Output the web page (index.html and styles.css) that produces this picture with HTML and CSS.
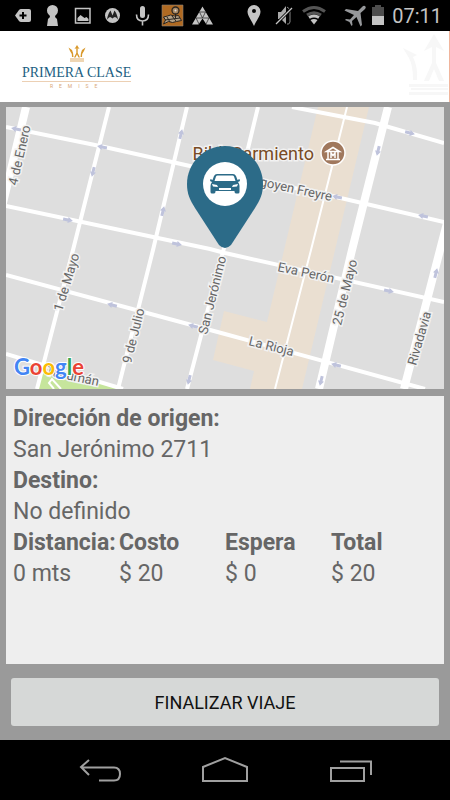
FILE: index.html
```html
<!DOCTYPE html>
<html lang="es">
<head>
<meta charset="UTF-8" />
<title>Primera Clase Remise</title>
<meta name="viewport" content="width=device-width, initial-scale=1.0" />
<link rel="stylesheet" href="styles.css">
</head>
<body>
<div class="statusbar">
    <div class="status-icons">
        <svg width="30" height="31" viewBox="0 0 30 31"><path fill="#c4c4c4" d="M7 15.5l4-5.5q.8-1 2-1h8a2 2 0 0 1 2 2v9a2 2 0 0 1-2 2h-8q-1.200 0-2-1z"/><path stroke="#000" stroke-width="2" d="M15 12v7M11.500 15.500h7"/></svg>
        <svg width="30" height="31" viewBox="0 0 30 31"><g fill="#c4c4c4"><circle cx="14.500" cy="10.500" r="5.500"/><path d="M11 13h7l-1 4 2 2 1 7H9l1-7 2-2z"/></g></svg>
        <svg width="30" height="31" viewBox="0 0 30 31"><path fill="none" stroke="#c4c4c4" stroke-width="1.500" d="M7.500 8.500h14.500v14.500H7.500z"/><path fill="#c4c4c4" d="M9.500 21v-3l3-3 4 3 2-1 2 2v2z"/></svg>
        <svg width="30" height="31" viewBox="0 0 30 31"><circle cx="14.500" cy="15.500" r="7.500" fill="#c4c4c4"/><path fill="#222" d="M9 19.500q1-6 3.500-9l2 5 2-5q2.500 3 3.500 9-1.500-2.500-3-2.500t-2.500 1.500q-1.500-1.500-2.500-1.500t-3 2.500z"/></svg>
        <svg width="30" height="31" viewBox="0 0 30 31"><rect x="12" y="6" width="5" height="12" rx="2.500" fill="#c4c4c4"/><path fill="none" stroke="#c4c4c4" stroke-width="1.600" d="M8.500 14.500q0 6.500 6 6.500t6-6.500M14.500 21v4.500"/></svg>
        <svg width="30" height="31" viewBox="0 0 30 31"><path fill="#b06a22" stroke="#8d8578" stroke-width=".6" d="M4 5h21v21H4z"/><path fill="#b4a288" stroke="#292521" d="M5.500 17l4-1 3-1 4 1 4-.500 3 5-5 1-4 1-4-1-5 2.500 2-4z"/><path stroke="#292521" d="M7 20l15-2M9 17l3 5M14 16l4 5"/><circle cx="17.500" cy="10.500" r="3.500" fill="#a98a66" stroke="#292521" stroke-width="1.300"/><circle cx="17.500" cy="10.500" r="1" fill="#ddd"/><path stroke="#292521" d="M17.500 14v5"/></svg>
        <svg width="30" height="31" viewBox="0 0 30 31"><path fill="#c4c4c4" d="M14.500 6.500L25 24.500h-6.500l-4-6-4 6H4z"/><path fill="none" stroke="#333" stroke-width=".8" d="M11.500 12h6l-3 6zM8 18h13M8 18l3 6M21 18l-3 6"/></svg>
    </div>
    <div class="status-icons">
        <svg width="30" height="31" viewBox="0 0 30 31"><path fill="#c4c4c4" fill-rule="evenodd" d="M15 5a6.500 6.500 0 0 1 6.500 6.500C21.500 16 17 21 15 26 13 21 8.500 16 8.500 11.500A6.500 6.500 0 0 1 15 5zm0 4a2 2 0 1 0 0 4 2 2 0 0 0 0-4z"/></svg>
        <svg width="30" height="31" viewBox="0 0 30 31"><path fill="#aaa" d="M9 12h3l5-6v18l-5-5H9z"/><path fill="none" stroke="#888" d="M18 7q3 1 3 5v10q-1 3-3 2"/><path stroke="#000" stroke-width="3" d="M8 23L23 8"/><path stroke="#c4c4c4" stroke-width="1.300" d="M7 24L23 8"/></svg>
        <svg width="30" height="31" viewBox="0 0 30 31"><path fill="none" stroke="#555" stroke-width="3" d="M4 11.500q11-8 22 0M8 15q7-4.500 14 0"/><path fill="none" stroke="#c4c4c4" stroke-width="3" d="M10 17.500q5-3 10 0"/><path fill="#c4c4c4" d="M11.500 20q3.500-2 7 0L15 24.500z"/></svg>
        <svg class="plane" width="26" height="31" viewBox="0 0 26 31"><path fill="#96989b" d="M23.500 6.500q-1.500-1.500-3.500.5l-4 4-12-2-1.500 1.500 9.500 4.500-4 4.500-4-.500-1 1 4.500 2 2 4 1-1-.5-4 4.500-4 4 9.500 1.500-1.500-1.500-12 4-3.500q2-1.500 1-3z"/></svg>
        <svg width="20" height="31" viewBox="0 0 20 31"><path fill="#4d4d4d" d="M4 7h3V5h6v2h3v9H4z"/><path fill="#c4c4c4" d="M4 16h12v9H4z"/></svg>
        <time class="clock">07:11</time>
    </div>
</div>

<header class="header">
    <div class="logo">
        <svg width="18" height="17" viewBox="0 0 18 17"><path fill="#d9982a" d="M.5 2.500L4 5q1.500 3 1.500 7H4q0-4-2-6zM17.500 2.500L14 5q-1.500 3-1.500 7H14q0-4 2-6zM9 0l2.500 4-1.800-.8V8l2.300 4.500h-1.500L9 9.500l-1.500 3H6L8.300 8V3.200L6.500 4z"/><path stroke="#e0ae68" stroke-width="1.200" d="M2 14h14M2 16h14"/></svg>
        <span class="logo-name">PRIMERA CLASE</span>
        <span class="logo-sub">REMISE</span>
    </div>
    <svg class="crown" width="47" height="71" viewBox="0 0 47 71"><g fill="#f7f7f7"><path d="M1 17l14 7-4 2q5 10 4 23h-4q0-15-4-22zM32 3l10 17-8-4v16l8 18h-5l-5-12-5 12h-5l8-18V16l-8 4z"/><path d="M7 53h39v3H7zM9 57h37v2H9zM7 61h39v3H7z"/></g></svg>
</header>

<main class="trip">
    <svg class="map" viewBox="6 107 438 282" preserveAspectRatio="xMidYMid slice" role="img" aria-label="Mapa">
        <defs>
            <path id="arrow" d="M-5-1.500h5V-3l5 3-5 3V1.500h-5z" fill="#bfc3dc"/>
        </defs>
        <rect x="6" y="107" width="438" height="282" fill="#dedede"/>
        <path fill="#eadfd1" d="M318 107h51L302 389h-52l4-18-41-11 11-49 43 11z"/>
        <path fill="#c6e59c" d="M41 364l82 25H37z"/>
        <g class="streets">
            <path d="M6 127l94 19 90 20 142 30 112 26M6 206l204 43 15 4 219 49M6 275l219 59 200 55M6 354l117 35M292 107l83 16 69 20"/>
            <path d="M109 107L73 250 37 389M187 107l-34 143-35 139M258 107l-34 141-37 141"/>
            <path stroke-width="2" d="M347 107l-36 143-36 139M54 389l-5-6 3-4 9 10"/>
            <path stroke-width="8" d="M26 107L2 207M388 107l-36 143-33 139M447 223l-43 166"/>
        </g>
        <use href="#arrow" transform="translate(16 129) rotate(191)"/>
        <use href="#arrow" transform="translate(102 147) rotate(191)"/>
        <use href="#arrow" transform="translate(93 172) rotate(104)"/>
        <use href="#arrow" transform="translate(181 134) rotate(-76)"/>
        <use href="#arrow" transform="translate(163 211) rotate(-76)"/>
        <use href="#arrow" transform="translate(68 220) rotate(12)"/>
        <use href="#arrow" transform="translate(177 244) rotate(12)"/>
        <use href="#arrow" transform="translate(112 305) rotate(194)"/>
        <use href="#arrow" transform="translate(193 326) rotate(194)"/>
        <use href="#arrow" transform="translate(189 380) rotate(104)"/>
        <use href="#arrow" transform="translate(410 133) rotate(14)"/>
        <use href="#arrow" transform="translate(378 151) rotate(104)"/>
        <use href="#arrow" transform="translate(337 197) rotate(192)"/>
        <use href="#arrow" transform="translate(423 216) rotate(192)"/>
        <use href="#arrow" transform="translate(389 291) rotate(12)"/>
        <use href="#arrow" transform="translate(436 273) rotate(-76)"/>
        <use href="#arrow" transform="translate(336 365) rotate(195)"/>
        <use href="#arrow" transform="translate(321 381) rotate(104)"/>
        <g class="street-names">
            <text transform="translate(17 186) rotate(-77)">4 de Enero</text>
            <text transform="translate(62 312) rotate(-73)">1 de Mayo</text>
            <text transform="translate(131 364) rotate(-76)">9 de Julio</text>
            <text transform="translate(207 335) rotate(-76)">San Jerónimo</text>
            <text transform="translate(341 326) rotate(-76)">25 de Mayo</text>
            <text transform="translate(416 366) rotate(-74)">Rivadavia</text>
            <text transform="translate(277 271) rotate(12)">Eva Perón</text>
            <text transform="translate(248 345) rotate(14)">La Rioja</text>
            <text transform="translate(331 201) rotate(12)" text-anchor="end">Irigoyen Freyre</text>
            <text transform="translate(98 386) rotate(12)" text-anchor="end">Tucumán</text>
        </g>
        <text class="place" x="314" y="160" text-anchor="end">Bibl. Sarmiento</text>
        <circle cx="333" cy="153" r="12" fill="#a0785d" stroke="#fff" stroke-width="1.500"/>
        <path fill="none" stroke="#fff" stroke-width="1.500" d="M326.500 151.500l6.500-4 6.500 4zM328 152v7M338 152v7M326 159.500h14M331 158v-5l2 2.500 2-2.500v5"/>
        <path fill="#2c6b88" d="M225 146c21 0 38 17 38 38 0 10-3 16-8 24l-24 37q-6 6-12 0l-24-37c-5-8-8-14-8-24 0-21 17-38 38-38z"/>
        <circle cx="225" cy="184" r="22" fill="#fff"/>
        <path fill="#2c6b88" fill-rule="evenodd" d="M217 174h16q2 0 3 2l1.500 4 2-1 .5 2-2 1q1.500 2 1.500 4v6q0 1.500-1.500 1.500h-2q-1.500 0-1.500-2v-.5h-19v.5q0 2-1.500 2h-2q-1.500 0-1.500-1.500v-6q0-2 1.500-4l-2-1 .5-2 2 1 1.500-4q1-2 3-2zm.500 1.500q-1 0-1.500 1l-1.500 4.500h21l-1.500-4.500q-.5-1-1.500-1zM212 184l1 2.500 5 .5-1-2zM238 184l-1 2.500-5 .5 1-2zM219 188v2h12v-2z"/>
        <text class="google" x="14" y="375"><tspan fill="#4285f4">G</tspan><tspan fill="#ea4335">o</tspan><tspan fill="#fbbc05">o</tspan><tspan fill="#4285f4">g</tspan><tspan fill="#34a853">l</tspan><tspan fill="#ea4335">e</tspan></text>
    </svg>

    <section class="details">
        <dl class="places">
            <dt>Dirección de origen:</dt>
            <dd>San Jerónimo 2711</dd>
            <dt>Destino:</dt>
            <dd>No definido</dd>
        </dl>
        <table class="fare">
            <thead>
                <tr><th>Distancia:</th><th>Costo</th><th>Espera</th><th>Total</th></tr>
            </thead>
            <tbody>
                <tr><td>0 mts</td><td>$ 20</td><td>$ 0</td><td>$ 20</td></tr>
            </tbody>
        </table>
    </section>

    <button type="button" class="finish">FINALIZAR VIAJE</button>
</main>

<nav class="navbar">
    <button type="button" aria-label="Atrás"><svg width="46" height="28" viewBox="0 0 46 28"><path d="M12 4L4 11l8 8M4 11.500h33q6 0 6 6.500t-6 6.500H22"/></svg></button>
    <button type="button" aria-label="Inicio"><svg width="46" height="28" viewBox="0 0 46 28"><path d="M1 11L23 2l22 9v14H1z"/></svg></button>
    <button type="button" aria-label="Recientes"><svg width="46" height="28" viewBox="0 0 46 28"><path d="M4 12h33v13H4zM13 5.500h31V19"/></svg></button>
</nav>
</body>
</html>
```
FILE: styles.css
```css
* {
    box-sizing: border-box;
}
body {
    margin: 0;
    min-height: 100vh;
    display: flex;
    flex-direction: column;
    background: #9a9a9a;
    font-family: Roboto, sans-serif;
    color: #666;
}
svg {
    display: block;
}
.statusbar {
    display: flex;
    justify-content: space-between;
    height: 31px;
    padding: 0 8px;
    background: #000;
}
.status-icons {
    display: flex;
    align-items: center;
}
.plane {
    margin-left: 13px;
}
.clock {
    width: 54px;
    text-align: right;
    font-size: 20px;
    color: #c4c4c4;
}
.header {
    display: flex;
    justify-content: space-between;
    background: #fff;
    border-right: 1px solid #f0b49c;
}
.logo {
    display: flex;
    flex-direction: column;
    align-items: center;
    padding: 14px 0 0 22px;
}
.logo-name {
    margin-top: 3px;
    border-bottom: 1px solid #ecd0b4;
    font-family: "Liberation Serif", serif;
    font-size: 14px;
    line-height: 16px;
    color: #1c5f83;
}
.logo-sub {
    font-size: 5px;
    line-height: 8px;
    letter-spacing: 6px;
    color: #d9a878;
}
.trip {
    flex: 1;
    display: flex;
    flex-direction: column;
    padding: 5px 6px 14px;
}
.map {
    width: 100%;
}
.streets {
    fill: none;
    stroke: #fff;
    stroke-width: 4px;
}
.street-names {
    font-size: 13px;
    fill: #666;
    stroke: #f2f2f2;
    stroke-width: 3px;
    paint-order: stroke;
}
.place {
    font-size: 18px;
    fill: #794b24;
    stroke: #f2f2f2;
    stroke-width: 3px;
    paint-order: stroke;
}
.google {
    font-family: Lato, sans-serif;
    font-size: 22px;
    font-weight: 700;
    stroke: #fff;
    stroke-width: 2px;
    paint-order: stroke;
}
.details {
    flex: 1;
    margin-top: 7px;
    padding: 7px;
    background: #eee;
    font-size: 23px;
    line-height: 31px;
}
.places {
    margin: 0;
}
.places dt {
    font-weight: 700;
}
.places dd {
    margin: 0;
}
.fare {
    width: 100%;
    table-layout: fixed;
    border-collapse: collapse;
    text-align: left;
}
.fare th,
.fare td {
    padding: 0;
    white-space: nowrap;
}
.finish {
    height: 48px;
    margin: 14px 5px 0;
    border: 0;
    border-radius: 3px;
    background: #d6d8d7;
    font-family: inherit;
    font-size: 18px;
    color: #111;
}
.navbar {
    display: grid;
    grid-template-columns: repeat(3, 1fr);
    height: 60px;
    padding: 0 37px;
    background: #000;
}
.navbar button {
    display: flex;
    align-items: center;
    justify-content: center;
    padding: 0;
    border: 0;
    background: none;
}
.navbar path {
    fill: none;
    stroke: #a0a0a0;
    stroke-width: 2px;
}
```
